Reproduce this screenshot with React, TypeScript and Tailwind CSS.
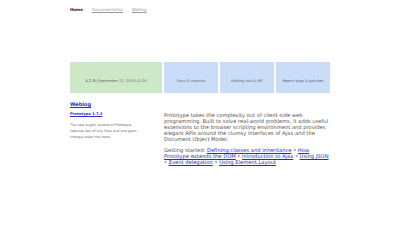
const links = [
    "Defining classes and inheritance",
    "How Prototype extends the DOM",
    "Introduction to Ajax",
    "Using JSON",
    "Event delegation",
    "Using Element.Layout",
];

const App = () => {
    return (
        <div className="min-h-screen bg-white text-[#555] font-['DejaVu_Sans',sans-serif]">
            <div className="w-[260px] mx-auto">

                {/* NAV */}
                <nav className="flex items-center gap-[9px] pt-[5px] h-[14px] text-[4px]">
                    <span className="font-bold text-[#222]">Home</span>
                    <a className="text-[#999] underline">Documentation</a>
                    <a className="text-[#999] underline">Weblog</a>
                </nav>

                {/* BOXES */}
                <div className="flex gap-[2px] h-[31px] mt-[48px] text-[3.6px] text-[#667]">
                    <div className="w-[92px] bg-[#cde8c6] flex items-end justify-center pb-[9px]">
                        <span><b>1.7.3</b> (September 22, 2015) &amp; Git</span>
                    </div>
                    <div className="flex-1 bg-[#c9dcf8] flex items-end justify-center pb-[9px]">
                        Docs &amp; tutorials
                    </div>
                    <div className="flex-1 bg-[#c9dcf8] flex items-end justify-center pb-[9px]">
                        Mailing lists &amp; IRC
                    </div>
                    <div className="flex-1 bg-[#c9dcf8] flex items-end justify-center pb-[9px]">
                        Report bugs &amp; patches
                    </div>
                </div>

                {/* CONTENT */}
                <div className="flex gap-[20px] mt-[7px]">
                    <div className="w-[74px]">
                        <h2 className="text-[5px] font-bold text-[#2b2bd6] underline leading-[8px]">Weblog</h2>
                        <a className="block mt-[3px] text-[3.7px] font-bold text-[#2b2bd6] underline leading-[6px]">Prototype 1.7.3</a>
                        <p className="mt-[6px] text-[3.4px] leading-[5.8px] text-[#666]">
                            The new bugfix release of Prototype features lots of tiny fixes and one giant change under the hood.
                        </p>
                    </div>
                    <div className="flex-1 text-[5.2px] leading-[6px] pt-[12px]">
                        <p>
                            Prototype takes the complexity out of client-side web programming. Built to solve real-world problems, it adds useful extensions to the browser scripting environment and provides elegant APIs around the clumsy interfaces of Ajax and the Document Object Model.
                        </p>
                        <p className="mt-[5px]">
                            Getting started:{" "}
                            {links.map((l, i) => (
                                <span key={l}>
                                    {i > 0 && " • "}
                                    <a className="text-[#2b2bd6] underline">{l}</a>
                                </span>
                            ))}
                        </p>
                    </div>
                </div>
            </div>
        </div>
    );
};

export default App;
